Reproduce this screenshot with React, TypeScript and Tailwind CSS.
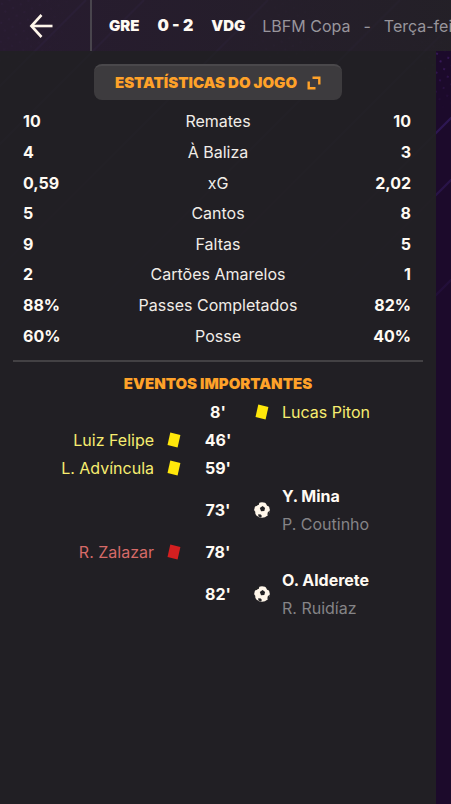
import { clsx } from 'clsx'

type EventKind = 'yellow' | 'red' | 'goal'

interface MatchEvent {
  minute: number
  side: 'home' | 'away'
  kind: EventKind
  player: string
  assist?: string
}

const STATS = [
  { label: 'Remates', home: '10', away: '10' },
  { label: 'À Baliza', home: '4', away: '3' },
  { label: 'xG', home: '0,59', away: '2,02' },
  { label: 'Cantos', home: '5', away: '8' },
  { label: 'Faltas', home: '9', away: '5' },
  { label: 'Cartões Amarelos', home: '2', away: '1' },
  { label: 'Passes Completados', home: '88%', away: '82%' },
  { label: 'Posse', home: '60%', away: '40%' },
]

const EVENTS: MatchEvent[] = [
  { minute: 8, side: 'away', kind: 'yellow', player: 'Lucas Piton' },
  { minute: 46, side: 'home', kind: 'yellow', player: 'Luiz Felipe' },
  { minute: 59, side: 'home', kind: 'yellow', player: 'L. Advíncula' },
  { minute: 73, side: 'away', kind: 'goal', player: 'Y. Mina', assist: 'P. Coutinho' },
  { minute: 78, side: 'home', kind: 'red', player: 'R. Zalazar' },
  { minute: 82, side: 'away', kind: 'goal', player: 'O. Alderete', assist: 'R. Ruidíaz' },
]

// Diagonals run at 45deg, each one is defined by where it meets the top edge
const DIAGONALS = [86, 144, 268, 400, 476, 569, 631, 731]

function Backdrop() {
  return (
    <svg className="pointer-events-none absolute inset-0 h-full w-full" aria-hidden="true">
      <defs>
        <pattern id="dots" width="12" height="12" patternUnits="userSpaceOnUse" patternTransform="rotate(20)">
          <circle cx="3" cy="3" r="1" fill="#5b2a96" />
          <circle cx="9" cy="9" r="1" fill="#5b2a96" />
        </pattern>
        <radialGradient id="fade">
          <stop offset="0" stopColor="white" stopOpacity="0.6" />
          <stop offset="1" stopColor="white" stopOpacity="0" />
        </radialGradient>
        <mask id="dot-mask">
          <circle cx="10" cy="15" r="75" fill="url(#fade)" />
          <circle cx="290" cy="35" r="50" fill="url(#fade)" />
          <circle cx="440" cy="60" r="50" fill="url(#fade)" />
        </mask>
        <linearGradient id="line-fade" gradientUnits="userSpaceOnUse" x1="0" y1="0" x2="0" y2="380">
          <stop offset="0" stopColor="#5030a0" stopOpacity="0.5" />
          <stop offset="1" stopColor="#5030a0" stopOpacity="0" />
        </linearGradient>
      </defs>
      <rect width="100%" height="100%" fill="url(#dots)" mask="url(#dot-mask)" />
      {DIAGONALS.map((x) => (
        <path key={x} d={`M${x} 0 L${x - 380} 380`} stroke="url(#line-fade)" strokeWidth="2" />
      ))}
    </svg>
  )
}

function BackArrow() {
  return (
    <svg width="24" height="26" viewBox="0 0 24 26" fill="none" stroke="#fff6ea" strokeWidth="2.6" aria-hidden="true">
      <path d="M23.5 13H2.5" />
      <path d="M12.5 2 2.4 13 12.5 24" />
    </svg>
  )
}

function ExpandIcon() {
  return (
    <svg width="14" height="14" viewBox="0 0 14 14" fill="none" stroke="currentColor" strokeWidth="2.4" aria-hidden="true">
      <path d="M5.5 1.7H12.3V8.5" />
      <path d="M1.7 5.5V12.3H8.5" />
    </svg>
  )
}

function CardIcon({ color }: { color: string }) {
  return (
    <svg width="16" height="16" viewBox="0 0 16 16" role="img" aria-label="Cartão">
      <path d="M4.3.4 14.4 3 11.6 15.6 1.5 13Z" fill={color} />
    </svg>
  )
}

function BallIcon() {
  return (
    <svg width="16" height="16" viewBox="0 0 16 16" role="img" aria-label="Golo">
      <circle cx="8" cy="8" r="7.8" fill="#fff6ea" />
      <g fill="#222124">
        <path d="m8.6 4 2.5 2-.8 3.1-3.3.1-1.2-3.1Z" />
        <path d="M1 1.6 5.6 0 4.9 2.2 2.7 3.9.2 4.6Z" />
        <path d="m11.2 0 3.8 2.6.3 2-2.2-.9Z" />
        <path d="m16 8.8-1.4 4.2-1.3-.3.6-2.6Z" />
        <path d="m4.2 12.2 2.6.2 1.1 1.7-.9 1.5-2.6-1Z" />
        <path d="m0 8.4 1.2 1.3.2 2L0 12Z" />
      </g>
    </svg>
  )
}

function EventIcon({ kind }: { kind: EventKind }) {
  if (kind === 'goal') return <BallIcon />
  return <CardIcon color={kind === 'yellow' ? '#ffe70a' : '#d41f20'} />
}

function EventNames({ event }: { event: MatchEvent }) {
  return (
    <div className={clsx('px-2', event.side === 'home' && 'text-right')}>
      <div
        className={clsx(
          event.kind === 'yellow' && 'text-[#f7ed70]',
          event.kind === 'red' && 'text-[#d66a68]',
          event.kind === 'goal' && 'font-bold text-[#fffaf3]',
        )}
      >
        {event.player}
      </div>
      {event.assist && <div className="text-[#858487]">{event.assist}</div>}
    </div>
  )
}

function EventRow({ event }: { event: MatchEvent }) {
  const home = event.side === 'home'
  return (
    <li className="grid grid-cols-[1fr_24px_64px_24px_1fr] items-center leading-7">
      {home ? <EventNames event={event} /> : <span />}
      <span className="flex justify-center">{home && <EventIcon kind={event.kind} />}</span>
      <span className="text-center font-bold text-[#fffaf3]">{event.minute}'</span>
      <span className="flex justify-center">{!home && <EventIcon kind={event.kind} />}</span>
      {home ? <span /> : <EventNames event={event} />}
    </li>
  )
}

export default function App() {
  return (
    <div className="relative flex min-h-screen flex-col overflow-hidden bg-[#1c0a2b] font-['Inter','Liberation_Sans',sans-serif] text-base text-[#f1ede8]">
      <Backdrop />

      <header className="relative flex h-[51px] items-center overflow-hidden whitespace-nowrap bg-linear-to-r from-[#291e30]/85 to-[#242127]/95">
        <button type="button" aria-label="Voltar" className="flex h-full w-[92px] shrink-0 items-center justify-center border-r-2 border-[#49454d] pr-2">
          <BackArrow />
        </button>
        <div className="flex items-baseline gap-[18px] pl-[17px] text-[15px] font-black text-[#fffaf3]">
          <span>GRE</span>
          <span className="text-base">0 - 2</span>
          <span>VDG</span>
        </div>
        <div className="flex gap-[13px] pl-[17px] text-[#98959c]">
          <span>LBFM Copa</span>
          <span>-</span>
          <span>Terça-feira</span>
        </div>
      </header>

      <main className="relative mr-[15px] flex-1 bg-[#222124]/95 px-[13px] pt-[13px]">
        <button
          type="button"
          className="mx-auto flex h-9 w-[248px] items-center justify-center gap-2.5 rounded-lg border-t-2 border-[#4a484b] bg-[#3d3b3e] text-[15px] font-black text-[#ffa229]"
        >
          ESTATÍSTICAS DO JOGO
          <ExpandIcon />
        </button>

        <table className="mt-1.5 h-[245px] w-full">
          <tbody>
            {STATS.map((s) => (
              <tr key={s.label}>
                <td className="w-[72px] p-0 pl-2.5 font-bold text-[#fffaf3]">{s.home}</td>
                <th scope="row" className="p-0 text-center font-normal">{s.label}</th>
                <td className="w-[72px] p-0 pr-3 text-right font-bold text-[#fffaf3]">{s.away}</td>
              </tr>
            ))}
          </tbody>
        </table>

        <section className="mt-[9px] border-t-2 border-[#434144] pt-2">
          <h2 className="text-center text-[15px] leading-7 font-black text-[#ffa229]">EVENTOS IMPORTANTES</h2>
          <ul>
            {EVENTS.map((e) => (
              <EventRow key={e.minute} event={e} />
            ))}
          </ul>
        </section>
      </main>
    </div>
  )
}
